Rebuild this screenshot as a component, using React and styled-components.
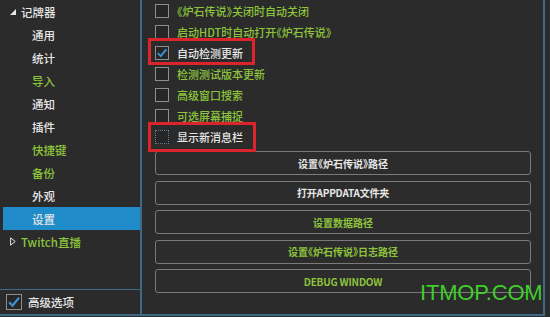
import React from 'react';
import styled, { createGlobalStyle } from 'styled-components';

const Global = createGlobalStyle`
  html, body { margin: 0; padding: 0; background: #2b2b2b; overflow: hidden; }
  #root { width: 550px; height: 317px; }
`;

const FONT = `"Noto Sans CJK SC", "Noto Sans", "Liberation Sans", sans-serif`;
const BLUE_LINE = '#3d6b87';
const GREEN = '#8cc43c';
const WHITE = '#e6e6e6';

const Window = styled.div`
  position: relative;
  width: 550px;
  height: 317px;
  background: #2b2b2b;
  font-family: ${FONT};
  font-feature-settings: "halt";
  overflow: hidden;
`;

const Frame = styled.div`
  display: flex;
  width: 543px;
  height: 314px;
  border-right: 2px solid ${BLUE_LINE};
  border-bottom: 2px solid ${BLUE_LINE};
`;

const Sidebar = styled.div`
  display: flex;
  flex-direction: column;
  width: 140px;
  border-right: 2px solid ${BLUE_LINE};
`;

const Tree = styled.div`
  flex: 1;
  display: flex;
  flex-direction: column;
`;

const TreeItem = styled.div`
  display: flex;
  align-items: center;
  gap: 5px;
  height: 23px;
  margin-left: 3px;
  padding-left: ${p => (p.$level === 0 ? 7 : 29)}px;
  font-size: 11.5px;
  font-weight: 500;
  color: ${p => (p.$green ? GREEN : WHITE)};
  background: ${p => (p.$selected ? '#1f8bc8' : 'transparent')};
`;

const BottomBar = styled.div`
  display: flex;
  align-items: center;
  gap: 6px;
  height: 24px;
  padding-left: 6px;
  border-top: 1.5px solid ${BLUE_LINE};
  font-size: 11.5px;
  font-weight: 500;
  color: ${WHITE};
`;

const Content = styled.div`
  flex: 1;
  display: flex;
  flex-direction: column;
  padding: 0 12px 0 13px;
`;

const CheckRow = styled.div`
  display: flex;
  align-items: center;
  gap: 8px;
  height: 21px;
  font-size: 11px;
  font-weight: 500;
  color: ${p => (p.$green ? GREEN : WHITE)};
  white-space: nowrap;
`;

const Box = styled.span`
  position: relative;
  display: inline-flex;
  align-items: center;
  justify-content: center;
  flex: none;
  width: ${p => p.$size || 14}px;
  height: ${p => p.$size || 14}px;
  box-sizing: border-box;
  border: 1px ${p => (p.$focus ? 'dotted' : 'solid')} ${p => (p.$focus ? '#5d7f99' : '#8e8e8e')};
  background: #262626;
`;

const Buttons = styled.div`
  display: flex;
  flex-direction: column;
  gap: 5.5px;
  margin-top: 4px;
`;

const Button = styled.div`
  display: flex;
  align-items: center;
  justify-content: center;
  height: 24px;
  box-sizing: border-box;
  border: 1.5px solid #7a7a7a;
  border-radius: 3px;
  background: #2c2c2c;
  font-size: 10px;
  font-weight: 700;
  color: ${p => (p.$green ? GREEN : WHITE)};
  letter-spacing: ${p => (p.$latin ? '-0.2px' : '0')};
`;

const Highlight = styled.div`
  position: absolute;
  left: ${p => p.$x}px;
  top: ${p => p.$y}px;
  width: ${p => p.$w}px;
  height: ${p => p.$h}px;
  box-sizing: border-box;
  border: 3.5px solid #d9252b;
  pointer-events: none;
`;

const Watermark = styled.div`
  position: absolute;
  left: 420px;
  top: 280px;
  font-family: "Liberation Sans", Arial, sans-serif;
  font-size: 22px;
  color: #3fce2a;
  letter-spacing: -0.2px;
`;

const Check = ({ size = 14 }) => (
  <svg width={size - 2} height={size - 2} viewBox="0 0 12 12">
    <path d="M1.8 6.2 L4.7 9.1 L10.3 2.4" fill="none" stroke="#3a93d6" strokeWidth="1.9" />
  </svg>
);

const CheckBox = ({ checked, focus, size }) => (
  <Box $focus={focus} $size={size}>{checked && <Check size={size || 14} />}</Box>
);

const TriDown = () => (
  <svg width="6" height="6" viewBox="0 0 6 6"><path d="M6 0 L6 6 L0 6 Z" fill="#e6e6e6" /></svg>
);
const TriRight = () => (
  <svg width="6" height="9" viewBox="0 0 6 9"><path d="M0.6 0.8 L5.2 4.5 L0.6 8.2 Z" fill="none" stroke="#e6e6e6" strokeWidth="1" /></svg>
);

const treeItems = [
  { label: '记牌器', level: 0, icon: 'down' },
  { label: '通用', level: 1 },
  { label: '统计', level: 1 },
  { label: '导入', level: 1, green: true },
  { label: '通知', level: 1 },
  { label: '插件', level: 1 },
  { label: '快捷键', level: 1, green: true },
  { label: '备份', level: 1, green: true },
  { label: '外观', level: 1 },
  { label: '设置', level: 1, selected: true },
  { label: 'Twitch直播', level: 0, icon: 'right', green: true },
];

const checks = [
  { label: '《炉石传说》关闭时自动关闭', green: true },
  { label: '启动HDT时自动打开《炉石传说》', green: true },
  { label: '自动检测更新', checked: true },
  { label: '检测测试版本更新', green: true },
  { label: '高级窗口搜索', green: true },
  { label: '可选屏幕捕捉', green: true },
  { label: '显示新消息栏', focus: true },
];

const buttons = [
  { label: '设置《炉石传说》路径' },
  { label: '打开APPDATA文件夹', latin: true },
  { label: '设置数据路径', green: true },
  { label: '设置《炉石传说》日志路径', green: true },
  { label: 'DEBUG WINDOW', green: true, latin: true },
];

export default function App() {
  return (
    <>
      <Global />
      <Window>
        <Frame>
          <Sidebar>
            <Tree>
              {treeItems.map(t => (
                <TreeItem key={t.label} $level={t.level} $green={t.green} $selected={t.selected}>
                  {t.icon === 'down' && <TriDown />}
                  {t.icon === 'right' && <TriRight />}
                  <span>{t.label}</span>
                </TreeItem>
              ))}
            </Tree>
            <BottomBar>
              <CheckBox checked size={16} />
              <span>高级选项</span>
            </BottomBar>
          </Sidebar>
          <Content>
            {checks.map(c => (
              <CheckRow key={c.label} $green={c.green}>
                <CheckBox checked={c.checked} focus={c.focus} />
                <span>{c.label}</span>
              </CheckRow>
            ))}
            <Buttons>
              {buttons.map(b => (
                <Button key={b.label} $green={b.green} $latin={b.latin}>{b.label}</Button>
              ))}
            </Buttons>
          </Content>
        </Frame>
        <Highlight $x={148} $y={38} $w={107} $h={27} />
        <Highlight $x={148} $y={122} $w={108} $h={30} />
        <Watermark>ITMOP.COM</Watermark>
      </Window>
    </>
  );
}
